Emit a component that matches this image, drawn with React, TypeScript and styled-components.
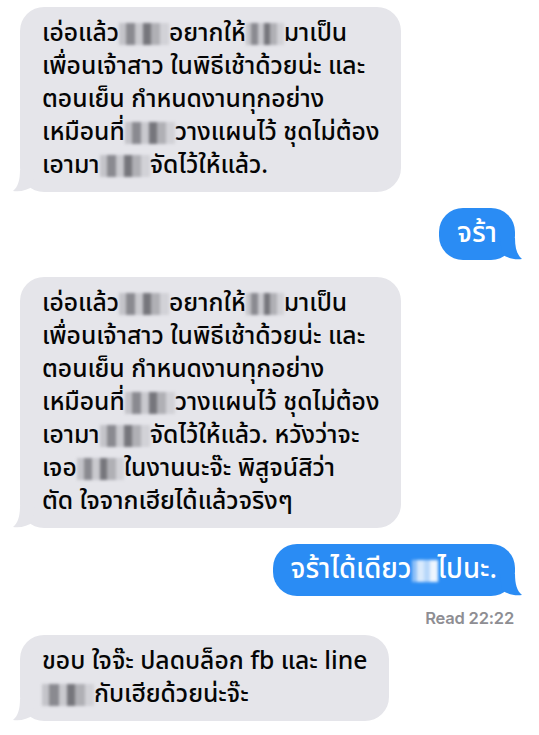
import React from "react";
import styled, { createGlobalStyle } from "styled-components";

const Global = createGlobalStyle`
  html, body { margin: 0; padding: 0; background: #ffffff; }
  body { width: 539px; overflow: hidden; }
`;

const FONT = `"Noto Sans Thai", "Noto Sans", "Liberation Sans", sans-serif`;
const GRAY = "#e5e5ea";
const BLUE = "#2a8cf4";

const Page = styled.div`
  width: 539px;
  height: 735px;
  box-sizing: border-box;
  padding: 7px 24px 0 20px;
  display: flex;
  flex-direction: column;
  font-family: ${FONT};
`;

const Row = styled.div<{ $side: "left" | "right"; $gap: number }>`
  display: flex;
  justify-content: ${(p) => (p.$side === "left" ? "flex-start" : "flex-end")};
  margin-top: ${(p) => p.$gap}px;
`;

const Bubble = styled.div<{ $side: "left" | "right" }>`
  position: relative;
  box-sizing: border-box;
  border-radius: 24px;
  font-weight: 500;
  ${(p) =>
    p.$side === "left"
      ? `
    padding: 10px 22px;
    background: ${GRAY};
    color: #050505;
    font-size: 24.7px;
    line-height: 33px;
  `
      : `
    padding: 9px 18px 9px 18px;
    background: ${BLUE};
    color: #ffffff;
    font-size: 27.5px;
    line-height: 34px;
  `}
`;

const Line = styled.div`
  white-space: nowrap;
`;

const Blur = styled.span<{ $w: number; $light?: boolean }>`
  display: inline-block;
  width: ${(p) => p.$w}px;
  height: 22px;
  vertical-align: -4px;
  filter: blur(1.6px);
  background: ${(p) =>
    p.$light
      ? "linear-gradient(90deg, #8fc0f7 0 20%, #d9eafc 20% 45%, #b7d7fa 45% 70%, #eef5fe 70% 100%)"
      : "linear-gradient(90deg, #c4c4c9 0 14%, #8a8a90 14% 32%, #c9c9ce 32% 48%, #76767c 48% 64%, #b0b0b5 64% 82%, #d2d2d7 82% 100%)"};
`;

const TailSvg = styled.svg<{ $side: "left" | "right" }>`
  position: absolute;
  bottom: 0;
  width: 22px;
  height: 22px;
  ${(p) => (p.$side === "left" ? "left: -7px;" : "right: -7px;")}
`;

const Receipt = styled.div`
  align-self: flex-end;
  margin-top: 12px;
  margin-right: 1px;
  font-family: Inter, "Liberation Sans", sans-serif;
  font-size: 16.5px;
  line-height: 20px;
  letter-spacing: -0.2px;
  font-weight: 600;
  color: #8e8e93;
`;

function Tail({ side }: { side: "left" | "right" }) {
  const fill = side === "left" ? GRAY : BLUE;
  return (
    <TailSvg $side={side} viewBox="0 0 22 22">
      {side === "right" ? (
        <path d="M0 0 H15 C15 10 17 17 22 21 C14 22 7 20 2 16 Z" fill={fill} />
      ) : (
        <path d="M22 0 H7 C7 10 5 17 0 21 C8 22 15 20 20 16 Z" fill={fill} />
      )}
    </TailSvg>
  );
}

function Msg({
  side,
  gap,
  children,
}: {
  side: "left" | "right";
  gap: number;
  children: React.ReactNode;
}) {
  return (
    <Row $side={side} $gap={gap}>
      <Bubble $side={side}>
        {children}
        <Tail side={side} />
      </Bubble>
    </Row>
  );
}

export default function App() {
  return (
    <>
      <Global />
      <Page>
        <Msg side="left" gap={0}>
          <Line>
            เอ่อแล้ว<Blur $w={50} />อยากให้<Blur $w={38} />มาเป็น
          </Line>
          <Line>เพื่อนเจ้าสาว ในพิธีเช้าด้วยน่ะ และ</Line>
          <Line>ตอนเย็น กำหนดงานทุกอย่าง</Line>
          <Line>
            เหมือนที่<Blur $w={50} />วางแผนไว้ ชุดไม่ต้อง
          </Line>
          <Line>
            เอามา<Blur $w={50} />จัดไว้ให้แล้ว.
          </Line>
        </Msg>
        <Msg side="right" gap={16}>
          <Line>จร้า</Line>
        </Msg>
        <Msg side="left" gap={17}>
          <Line>
            เอ่อแล้ว<Blur $w={50} />อยากให้<Blur $w={38} />มาเป็น
          </Line>
          <Line>เพื่อนเจ้าสาว ในพิธีเช้าด้วยน่ะ และ</Line>
          <Line>ตอนเย็น กำหนดงานทุกอย่าง</Line>
          <Line>
            เหมือนที่<Blur $w={50} />วางแผนไว้ ชุดไม่ต้อง
          </Line>
          <Line>
            เอามา<Blur $w={50} />จัดไว้ให้แล้ว. หวังว่าจะ
          </Line>
          <Line>
            เจอ<Blur $w={47} />ในงานนะจ๊ะ พิสูจน์สิว่า
          </Line>
          <Line>ตัด ใจจากเฮียได้แล้วจริงๆ</Line>
        </Msg>
        <Msg side="right" gap={16}>
          <Line>
            จร้าได้เดียว<Blur $w={26} $light />ไปนะ.
          </Line>
        </Msg>
        <Receipt>Read 22:22</Receipt>
        <Msg side="left" gap={7}>
          <Line>ขอบ ใจจ๊ะ ปลดบล็อก fb และ line</Line>
          <Line>
            <Blur $w={52} />กับเฮียด้วยน่ะจ๊ะ
          </Line>
        </Msg>
      </Page>
    </>
  );
}
